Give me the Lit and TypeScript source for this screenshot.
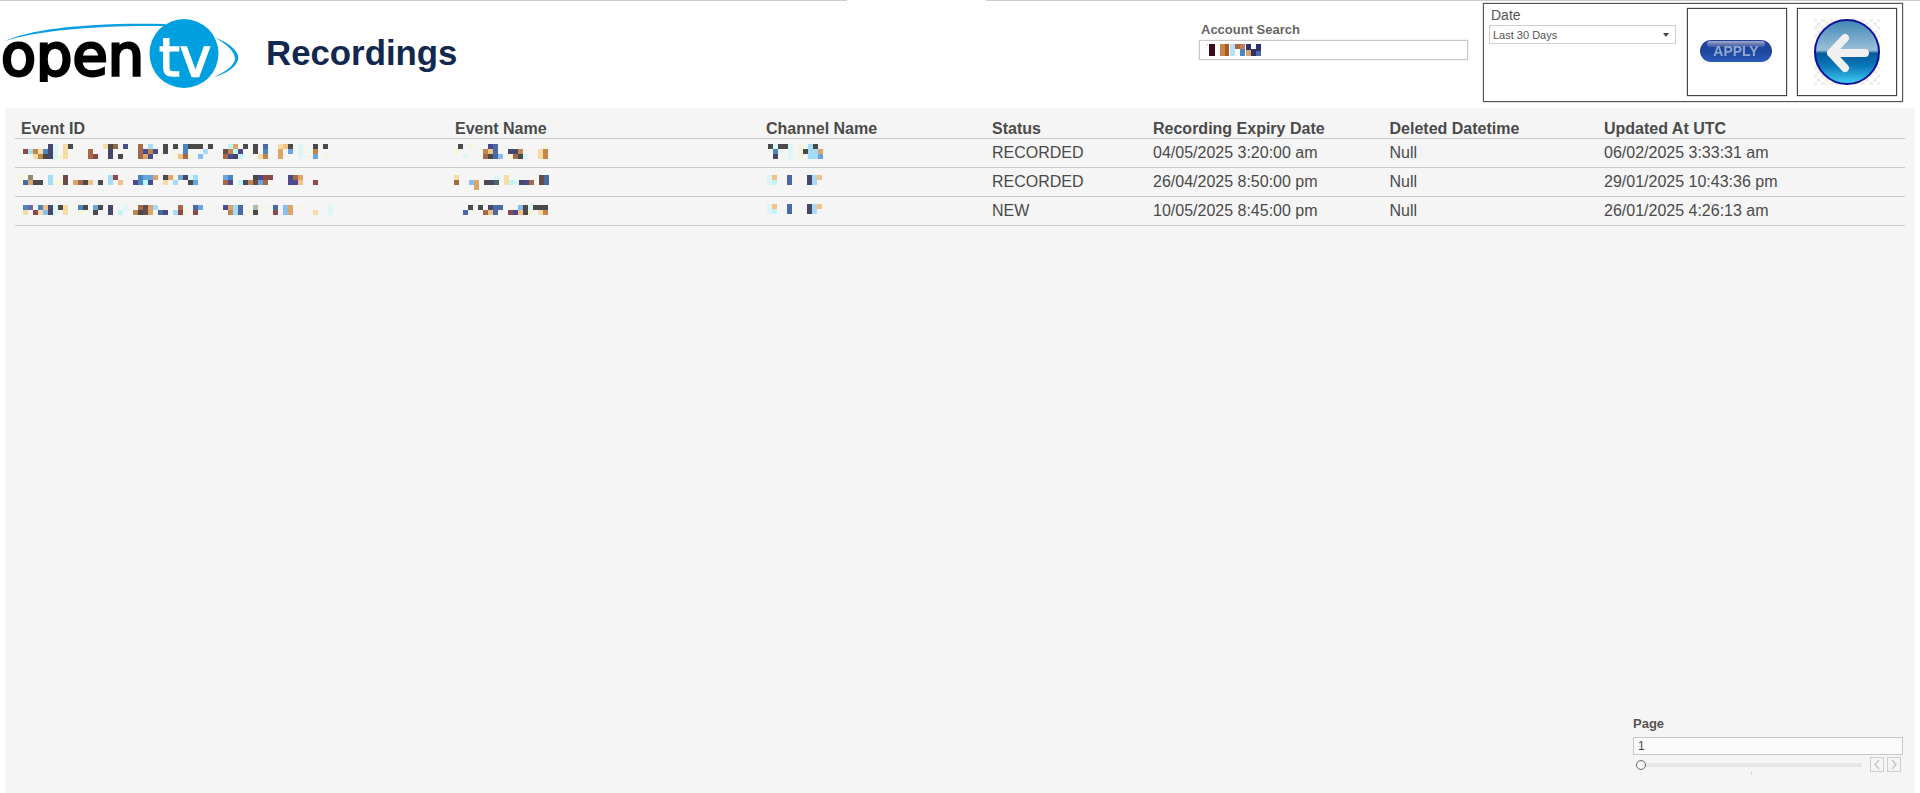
import { LitElement, html, css, svg } from "lit";
import { customElement } from "lit/decorators.js";

const PAL: Record<string, string> = {
  a: "#4a4a4a", n: "#47476b", v: "#4a4a8c", b: "#4a6aa5", m: "#4a86c0", l: "#86bdf5",
  s: "#a5dcf5", c: "#dcf5f5", t: "#c0f5f5", y: "#f5f5dc", f: "#f5dca5", o: "#f5c086",
  k: "#dca56a", u: "#c0864a", w: "#a5694a", r: "#8c4a4a", p: "#6b4a4a", g: "#8c8c6b",
  x: "#8c6b4a", q: "#4a6a6a", h: "#a5bda5", d: "#6a6aa5", z: "#6aa5dc",
};

type Mosaic = { x: number; y: number; lines: string[] };

const CH2: string[] = ["0c 1o 4b 8n 9s 10o", "0c 1t 4b 8n 9s"];

const ROWS: { id: Mosaic; name: Mosaic; channel: Mosaic; status: string; expiry: string; updated: string }[] = [
  {
    id: { x: 2, y: 5, lines: [
      "5n 6c 8f 9a 16f 17a 18x 20v 23w 25s 28a 30a 32m 33a 34a 35a 37a 41t 42k 44a 46a 48b 51f 52o 53a 55c 58a 60a",
      "0r 1s 2u 3f 4m 5n 6c 8f 13w 17n 23w 24v 25u 26v 28a 32m 36s 40p 41u 42t 43v 46a 48m 51k 53z 55c 58u",
      "2f 3u 4a 5n 6c 7y 8f 13w 14r 17n 19a 23w 24k 25v 30y 31o 32w 33y 35l 40w 41v 42n 43t 47f 48u 51k 55c 58z 60y",
    ] },
    name: { x: -2, y: 5, lines: [
      "1a 3y 7v 8b 18y",
      "0y 6u 7o 8b 11n 12n 13u 17f 18u",
      "2c 6w 7a 8b 9l 11y 12w 13a 14c 17f 18u",
    ] },
    channel: { x: 2, y: 5, lines: [
      "0a 1c 2a 3a 4c 6y 8s 9a",
      "1m 4c 6y 7a 8s 9s 10k",
      "1n 4c 6y 8s 9s 10z",
    ] },
    status: "RECORDED", expiry: "04/05/2025 3:20:00 am", updated: "06/02/2025 3:33:31 am",
  },
  {
    id: { x: 2, y: 7, lines: [
      "-1y 1g 5s 8p 17s 18r 23m 24z 25z 26k 28a 29k 30y 31z 32n 33c 34s 40z 41m 46a 47v 48r 49r 53v 54w 55k",
      "-1y 0b 1k 2a 3a 5s 6y 7y 8p 10k 11w 12a 13o 14c 15a 17s 19o 22v 23m 24t 25v 28f 30s 33a 34z 40w 41v 43t 44n 45u 46p 47z 48w 53v 54v 55o 58r",
    ] },
    name: { x: -1, y: 7, lines: [
      "0f 8c 10f 17p 18b",
      "0w 3l 4k 6a 7n 8q 10f 11t 12c 13n 14v 15w 17p 18b",
      "4k",
    ] },
    channel: { x: 1, y: 7, lines: CH2 },
    status: "RECORDED", expiry: "26/04/2025 8:50:00 pm", updated: "29/01/2025 10:43:36 pm",
  },
  {
    id: { x: 2, y: 8, lines: [
      "0m 1d 3m 4o 5n 6c 7a 8f 11m 12a 14z 15a 17n 20c 23w 24p 25k 26s 31w 34b 35z 40v 41k 42s 43b 46h 48y 50b 52l 53k 55y 61c",
      "0f 2r 3f 4l 5n 6c 8f 11y 14a 17n 19t 22u 23a 24p 25k 27b 28v 30s 31r 32y 34r 41u 42s 43b 45y 46a 50r 52l 53k 58f 61c",
    ] },
    name: { x: -2, y: 8, lines: [
      "3a 5a 7n 8b 9b 13l 14a 15c 16a 17a 18a",
      "2b 6w 7o 8b 11r 12v 13o 14a 15y 17f 18u",
    ] },
    channel: { x: 1, y: 7, lines: CH2 },
    status: "NEW", expiry: "10/05/2025 8:45:00 pm", updated: "26/01/2025 4:26:13 am",
  },
];

const mosaic = (m: Mosaic) => svg`<svg class="mosaic" width="100" height="28">
  ${m.lines.map((line, i) =>
    [...line.matchAll(/(-?\d+)([a-z])/g)].map(
      (t) => svg`<rect x=${m.x + Number(t[1]) * 5} y=${m.y + i * 5} width="5" height="5" fill=${PAL[t[2]]} shape-rendering="crispEdges"></rect>`
    )
  )}
</svg>`;

@customElement("app-root")
export class AppRoot extends LitElement {
  static styles = css`
    :host {
      display: flex;
      flex-direction: column;
      height: 100vh;
      background: #fff;
      font-family: "Liberation Sans", Arial, sans-serif;
      color: #4a4a4a;
      overflow: hidden;
    }
    .topline { display: flex; height: 1px; flex: none; }
    .topline i { background: #cbcbcb; }
    .topline i:first-child { width: 847px; margin-right: 139px; }
    .topline i:last-child { flex: 1; }

    .head { display: flex; height: 107px; flex: none; padding-right: 17px; }
    .logo { width: 240px; height: 100px; flex: none; }
    .title {
      margin: 32px 0 0 26px;
      font-size: 34.8px;
      line-height: 40px;
      font-weight: 700;
      color: #12284e;
    }
    .spacer { flex: 1; }
    .account { width: 269px; margin-top: 21px; }
    .account label { display: block; font-size: 13px; line-height: 16px; font-weight: 700; color: #666; padding-left: 2px; }
    .account .box {
      height: 20px;
      margin-top: 2px;
      box-sizing: border-box;
      border: 1px solid #c8c8c8;
      box-shadow: 0 0 1px #bbb;
      display: flex;
    }
    .filters {
      width: 420px;
      height: 99px;
      box-sizing: border-box;
      margin: 2px 0 0 15px;
      border: 1px solid #555;
      box-shadow: 0 0 1px #555;
      display: flex;
      padding: 4px 5px 0 5px;
    }
    .date { width: 187px; margin-right: 11px; }
    .date label { display: block; font-size: 14px; line-height: 16px; color: #555; padding-left: 2px; margin-top: -1px; }
    .select {
      height: 19px;
      margin-top: 2px;
      box-sizing: border-box;
      border: 1px solid #cfcfcf;
      display: flex;
      align-items: center;
      justify-content: space-between;
      padding: 0 6px 0 3px;
      font-size: 11px;
      color: #555;
    }
    .caret { width: 0; height: 0; border: 3px solid transparent; border-top: 4px solid #444; border-bottom: 0; }
    .imgbox {
      width: 100px;
      height: 88px;
      box-sizing: border-box;
      border: 1px solid #444;
      box-shadow: 0 0 1px #444;
      display: flex;
      align-items: center;
      justify-content: center;
      flex: none;
    }
    .imgbox + .imgbox { margin-left: 10px; }
    .pill { width: 74px; height: 24px; display: block; margin: -2px 2px 0 0; filter: blur(0.5px); }
    .arrow { width: 68px; height: 68px; display: block; filter: blur(0.3px); }

    .panel {
      flex: 1;
      margin: 0 5px;
      background: #f5f5f5;
      padding: 10px 10px 14px;
      display: flex;
      flex-direction: column;
      min-height: 0;
    }
    .row {
      display: grid;
      grid-template-columns: 434px 311px 226px 161px 236.5px 214.5px 1fr;
      padding-left: 6px;
      border-bottom: 1px solid #c8c8c8;
      height: 29px;
      box-sizing: border-box;
      align-items: center;
      font-size: 16px;
      color: #4a4a4a;
      white-space: nowrap;
    }
    .row.hd { height: 21px; font-weight: 700; align-items: start; line-height: 21px; }
    .mosaic { display: block; overflow: visible; }

    .pager { margin-top: auto; align-self: flex-end; width: 270px; margin-right: 2px; }
    .pager label { display: block; font-size: 13px; line-height: 16px; font-weight: 700; color: #555; }
    .pager .num {
      margin-top: 5px;
      height: 18px;
      box-sizing: border-box;
      border: 1px solid #c8c8c8;
      background: #fafafa;
      font-size: 12px;
      line-height: 16px;
      padding-left: 4px;
    }
    .ctl { display: flex; align-items: flex-start; margin-top: 2px; height: 22px; }
    .track { position: relative; width: 221px; height: 4px; margin: 6px 0 0 8px; background: #e6e6e6; }
    .thumb {
      position: absolute;
      left: -5px;
      top: -3px;
      width: 10px;
      height: 10px;
      box-sizing: border-box;
      border: 1.5px solid #6b6b6b;
      border-radius: 50%;
      background: #f5f5f5;
    }
    .tick { position: absolute; left: 110px; top: 8px; width: 1px; height: 4px; background: #d8d8d8; }
    .btn {
      width: 14px;
      height: 15px;
      box-sizing: border-box;
      border: 1px solid #cfcfcf;
      display: flex;
      align-items: center;
      justify-content: center;
    }
    .btn svg { width: 8px; height: 11px; display: block; }
    .btn.first { margin-left: 8px; }
    .btn.last { margin-left: 3px; }
  `;

  render() {
    return html`
      <div class="topline"><i></i><i></i></div>
      <div class="head">
        <svg class="logo" viewBox="0 0 240 100" aria-label="OpenTV">
          <defs>
            <clipPath id="lc"><rect x="0" y="30" width="150" height="51"></rect></clipPath>
          </defs>
          <path d="M5 40 C30 28 90 21 165 23 L165 25 C95 24 35 30 5 40Z" fill="#0a9fe0"></path>
          <path d="M214 36 C232 43 240 52 238 59 C236 66 226 73 214 76 C225 71 234 65 235 58 C235 51 227 43 214 36Z" fill="#0a9fe0"></path>
          <circle cx="184" cy="52.5" r="34.5" fill="#00a0e0"></circle>
          <g clip-path="url(#lc)">
            <text x="1" y="73.5" font-family="DejaVu Sans" font-size="57" textLength="143" lengthAdjust="spacingAndGlyphs" fill="#000" stroke="#000" stroke-width="2.8">open</text>
          </g>
          <text x="159" y="75" font-family="DejaVu Sans" font-size="54" textLength="52" lengthAdjust="spacingAndGlyphs" fill="#fff" stroke="#fff" stroke-width="1.6">tv</text>
        </svg>
        <div class="title">Recordings</div>
        <div class="spacer"></div>
        <div class="account">
          <label>Account Search</label>
          <div class="box">
            <svg width="70" height="18">
              <rect x="7" y="3" width="1" height="1" fill="#e0a070"></rect>
              <rect x="9" y="3" width="6" height="12" fill="#3c0a1c"></rect>
              <rect x="20" y="3" width="5" height="12" fill="#c8864a"></rect>
              <rect x="25" y="3" width="4" height="12" fill="#a85a20"></rect>
              <rect x="30" y="3" width="5" height="12" fill="#b8e0f5"></rect>
              <rect x="35" y="3" width="5" height="5" fill="#a5694a"></rect>
              <rect x="40" y="3" width="5" height="5" fill="#c08050"></rect>
              <rect x="40" y="8" width="5" height="7" fill="#4a86c0"></rect>
              <rect x="46" y="3" width="5" height="6" fill="#30306b"></rect>
              <rect x="46" y="9" width="5" height="6" fill="#dca56a"></rect>
              <rect x="51" y="8" width="5" height="7" fill="#30306b"></rect>
              <rect x="56" y="3" width="5" height="7" fill="#30306b"></rect>
              <rect x="56" y="10" width="5" height="5" fill="#4a6aa5"></rect>
            </svg>
          </div>
        </div>
        <div class="filters">
          <div class="date">
            <label>Date</label>
            <div class="select"><span>Last 30 Days</span><span class="caret"></span></div>
          </div>
          <div class="imgbox">
            <svg class="pill" viewBox="0 0 74 24">
              <defs>
                <linearGradient id="pg" x1="0" y1="0" x2="0" y2="1">
                  <stop offset="0" stop-color="#24409a"></stop>
                  <stop offset="0.5" stop-color="#1c469e"></stop>
                  <stop offset="1" stop-color="#2a5cb8"></stop>
                </linearGradient>
                <linearGradient id="pt" x1="0" y1="0" x2="0" y2="1">
                  <stop offset="0" stop-color="#b8b8cc" stop-opacity="0.9"></stop>
                  <stop offset="1" stop-color="#8090c0" stop-opacity="0.3"></stop>
                </linearGradient>
              </defs>
              <rect x="1" y="1" width="72" height="22" rx="11" fill="url(#pg)"></rect>
              <rect x="8" y="2" width="58" height="6" rx="3" fill="url(#pt)"></rect>
              <text x="37" y="16.5" text-anchor="middle" font-family="Liberation Sans" font-size="14" font-weight="700" fill="#93a6cc">APPLY</text>
            </svg>
          </div>
          <div class="imgbox">
            <svg class="arrow" viewBox="0 0 68 68">
              <defs>
                <pattern id="chk" width="8" height="8" patternUnits="userSpaceOnUse">
                  <rect width="8" height="8" fill="#fff"></rect>
                  <rect width="4" height="4" fill="#efefef"></rect>
                  <rect x="4" y="4" width="4" height="4" fill="#efefef"></rect>
                </pattern>
                <linearGradient id="ag" x1="0" y1="0" x2="0" y2="1">
                  <stop offset="0" stop-color="#3f86b5"></stop>
                  <stop offset="0.47" stop-color="#9cc0d8"></stop>
                  <stop offset="0.52" stop-color="#005a9e"></stop>
                  <stop offset="0.72" stop-color="#0a78b8"></stop>
                  <stop offset="1" stop-color="#44d0f4"></stop>
                </linearGradient>
              </defs>
              <rect x="1" y="1" width="66" height="66" fill="url(#chk)"></rect>
              <circle cx="34" cy="34" r="32" fill="url(#ag)" stroke="#10109a" stroke-width="2"></circle>
              <path d="M52 35 H18 M32 20 L18 35 L32 50" fill="none" stroke="#f0f0f0" stroke-width="8" stroke-linecap="round" stroke-linejoin="round"></path>
            </svg>
          </div>
        </div>
      </div>
      <div class="panel">
        <div class="row hd">
          <div>Event ID</div><div>Event Name</div><div>Channel Name</div><div>Status</div>
          <div>Recording Expiry Date</div><div>Deleted Datetime</div><div>Updated At UTC</div>
        </div>
        ${ROWS.map(
          (r) => html`<div class="row">
            <div>${mosaic(r.id)}</div>
            <div>${mosaic(r.name)}</div>
            <div>${mosaic(r.channel)}</div>
            <div>${r.status}</div>
            <div>${r.expiry}</div>
            <div>Null</div>
            <div>${r.updated}</div>
          </div>`
        )}
        <div class="pager">
          <label>Page</label>
          <div class="num">1</div>
          <div class="ctl">
            <div class="track"><span class="thumb"></span><span class="tick"></span></div>
            <div class="btn first"><svg viewBox="0 0 8 11"><path d="M6 1 L2 5.5 L6 10" fill="none" stroke="#c8c8c8" stroke-width="1.5"></path></svg></div>
            <div class="btn last"><svg viewBox="0 0 8 11"><path d="M2 1 L6 5.5 L2 10" fill="none" stroke="#c8c8c8" stroke-width="1.5"></path></svg></div>
          </div>
        </div>
      </div>
    `;
  }
}
